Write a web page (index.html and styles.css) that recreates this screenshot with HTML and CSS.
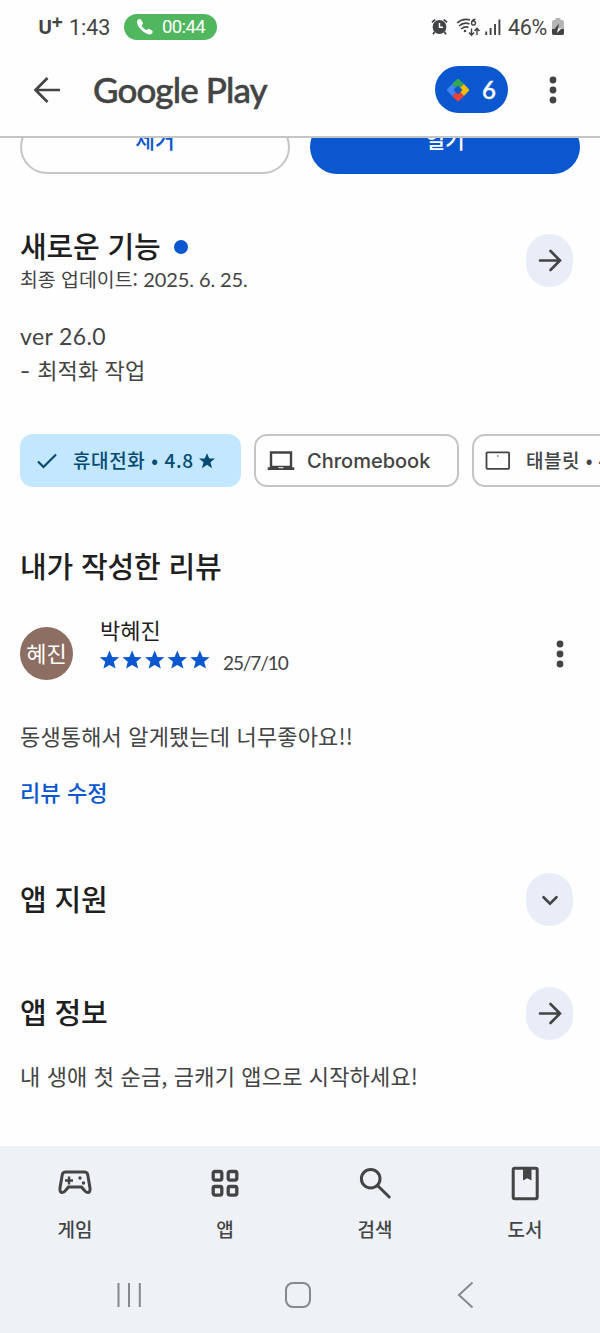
FILE: index.html
```html
<!DOCTYPE html>
<html lang="ko">
<head>
<meta charset="utf-8">
<title>Google Play</title>
<link rel="stylesheet" href="styles.css">
</head>
<body>
<div class="phone">
  <div class="status">
    <span class="carrier">U<sup>+</sup></span>
    <span class="clock">1:43</span>
    <span class="call">
      <svg width="18" height="18" viewBox="0 0 18 18"><path d="M2.2 1.6Q4 .4 5 1.5L7 5Q7.200 6 5.500 7.400Q7.200 10.600 10.400 12.200Q12 10.300 13 10.800L16.300 12.700Q17.400 13.800 16 15.400Q13.700 17.700 9 14.800Q3.600 11.500 1.500 6.600Q.2 3 2.200 1.600Z" fill="#fff"/></svg>
      <span>00:44</span>
    </span>
    <span class="grow"></span>
    <svg class="alarm" width="17" height="18" viewBox="0 0 17 18"><circle cx="8.500" cy="9" r="6.900" fill="#424344"/><path d="M1 4.300 4.200 1.600M16 4.300 12.800 1.600M3.600 14 2 16.200M13.400 14 15 16.200" stroke="#424344" stroke-width="1.800"/><path d="M8.500 5v4.300H12" fill="none" stroke="#fff" stroke-width="1.500"/></svg>
    <svg class="wifi" width="25" height="19" viewBox="0 0 25 19"><g fill="none" stroke="#424344" stroke-width="1.600"><path d="M1 5Q7 -.2 14 2M3 8Q8 3.600 13.500 6M5.200 11Q9 7.800 12.500 9.500"/><path d="M19.500 1.300Q15.500 2 15.500 5.200a2 2 0 1 0 .4-1.300" stroke-width="1.500"/><path d="M15.500 10.500v6.500M13 14.500l2.500 2.700 2.500-2.700M21 17v-6.500M18.500 13 21 10.200l2.500 2.800" stroke-width="1.400"/></g><circle cx="9" cy="13" r="1.300" fill="#424344"/></svg>
    <svg class="signal" width="16" height="17" viewBox="0 0 16 17"><path d="M1.200 12.500V16M5.600 9V16M10 5V16M14.400 .5V16" stroke="#424344" stroke-width="1.900"/></svg>
    <span class="percent">46%</span>
    <svg width="12" height="18" viewBox="0 0 12 18"><path d="M3.500 0h5v2H10q2 0 2 2v7H0V4q0-2 2-2h1.500Z" fill="#b5b5b5"/><path d="M0 11h12v4.500q0 1.500-2 1.500H2q-2 0-2-1.500Z" fill="#424344"/><path d="M7 5.500 2.600 11H6Z" fill="#424344"/><path d="M6 10.500h3.400L5 15Z" fill="#fff"/></svg>
  </div>

  <div class="appbar">
    <svg class="back" width="28" height="28" viewBox="0 0 28 28"><path d="M27 14H2M14.500 2 2.500 14l12 12" fill="none" stroke="#434444" stroke-width="2.700"/></svg>
    <span class="brand">Google Play</span>
    <span class="grow"></span>
    <span class="points">
      <svg width="24" height="24" viewBox="0 0 24 24"><g transform="rotate(45 12 12)"><path d="M4 5.500Q4 4 5.500 4H12v5H9v3H4Z" fill="#34a853"/><path d="M4 5.500Q4 4 5.500 4H12v5H9v3H4Z" fill="#fbbc04" transform="rotate(90 12 12)"/><path d="M4 5.500Q4 4 5.500 4H12v5H9v3H4Z" fill="#ea4335" transform="rotate(180 12 12)"/><path d="M4 5.500Q4 4 5.500 4H12v5H9v3H4Z" fill="#4285f4" transform="rotate(270 12 12)"/></g></svg>
      <span>6</span>
    </span>
    <svg class="more" width="8" height="28" viewBox="0 0 8 28"><g fill="#434444"><circle cx="4" cy="4" r="3.400"/><circle cx="4" cy="14" r="3.400"/><circle cx="4" cy="24" r="3.400"/></g></svg>
  </div>

  <div class="content">
    <div class="actions">
      <div class="btn outline"><span>제거</span></div>
      <div class="btn filled"><span>열기</span></div>
    </div>

    <section class="row news">
      <div class="news-head">
        <h2>새로운 기능<i class="dot"></i></h2>
        <p class="updated">최종 업데이트: <span class="lat">2025. 6. 25.</span></p>
      </div>
      <span class="round"><svg width="24" height="24" viewBox="0 0 24 24"><path d="M2 12.500H22M12.500 3 22 12.500 12.500 22" fill="none" stroke="#434444" stroke-width="2.600" stroke-linecap="round"/></svg></span>
    </section>
    <p class="notes"><span class="lat">ver 26.0</span><br><span class="dash">-</span> 최적화 작업</p>

    <div class="chips">
      <div class="chip selected">
        <svg width="20" height="16" viewBox="0 0 20 16"><path d="M1 8.500 6.500 14 19 1.500" fill="none" stroke="#064a73" stroke-width="2.200"/></svg>
        <span class="chip-phone">휴대전화 • 4.8</span>
        <svg class="chip-star" width="16" height="16" viewBox="0 0 20 20"><path d="M10 .2 12.800 6.800H20L14.300 11.500 16.300 19 10 14.800 3.700 19 5.700 11.500 0 6.800H7.200Z" fill="#064a73"/></svg>
      </div>
      <div class="chip chromebook">
        <svg width="28" height="22" viewBox="0 0 28 22"><path d="M4 2.500H24V17H4Z" fill="none" stroke="#434444" stroke-width="2.400"/><path d="M.7 17.300H27.300V20H.7Z" fill="#434444"/><path d="M11.500 17.700h5" stroke="#fff" stroke-width="1"/></svg>
        <span>Chromebook</span>
      </div>
      <div class="chip tablet">
        <svg width="26" height="20" viewBox="0 0 26 20"><rect x="1.500" y="1.300" width="22.600" height="16.500" rx=".8" fill="none" stroke="#434444" stroke-width="1.800"/><circle cx="12.800" cy="5" r=".8" fill="#434444"/></svg>
        <span>태블릿 • 4.6</span>
      </div>
    </div>

    <h2 class="review-title">내가 작성한 리뷰</h2>
    <div class="review">
      <span class="avatar">혜진</span>
      <div class="who">
        <div class="name">박혜진</div>
        <div class="rating">
          <svg width="110" height="20" viewBox="0 0 110 20" fill="#0b57d0"><defs><path id="star" d="M9.500 .5 12.200 6.900 19.200 7.300 13.800 11.800 15.600 18.600 9.500 14.900 3.400 18.600 5.200 11.800 -.2 7.300 6.800 6.900Z"/></defs><use href="#star"/><use href="#star" x="22.600"/><use href="#star" x="45.200"/><use href="#star" x="67.800"/><use href="#star" x="90.400"/></svg>
          <span class="date">25/7/10</span>
        </div>
      </div>
      <span class="grow"></span>
      <svg class="more2" width="8" height="28" viewBox="0 0 8 28"><g fill="#434444"><circle cx="4" cy="4" r="3.400"/><circle cx="4" cy="14" r="3.400"/><circle cx="4" cy="24" r="3.400"/></g></svg>
    </div>
    <p class="text">동생통해서 알게됐는데 너무좋아요!!</p>
    <p class="edit">리뷰 수정</p>

    <section class="row support">
      <h2>앱 지원</h2>
      <span class="round"><svg width="24" height="24" viewBox="0 0 24 24"><path d="M5.500 9.200 12 15.600 18.500 9.200" fill="none" stroke="#434444" stroke-width="2.600" stroke-linecap="round"/></svg></span>
    </section>
    <section class="row info">
      <h2>앱 정보</h2>
      <span class="round"><svg width="24" height="24" viewBox="0 0 24 24"><path d="M2 12.500H22M12.500 3 22 12.500 12.500 22" fill="none" stroke="#434444" stroke-width="2.600" stroke-linecap="round"/></svg></span>
    </section>
    <p class="text about">내 생애 첫 순금, 금캐기 앱으로 시작하세요!</p>
  </div>

  <div class="bottom">
    <nav class="tabs">
      <div class="tab">
        <svg width="36" height="36" viewBox="0 0 36 36"><path d="M8.500 7H27.500Q30 7 30.700 9.500L33 23Q33.500 27.600 30.500 27.600 29 27.600 27.500 25.500L24.500 22H11.500L8.500 25.500Q7 27.600 5.500 27.600 2.500 27.600 3 23L5.300 9.500Q6 7 8.500 7Z" fill="none" stroke="#434444" stroke-width="3"/><path d="M12 11.500v8M8 15.500h8" stroke="#434444" stroke-width="2.400"/><circle cx="23" cy="13" r="1.700" fill="#434444"/><circle cx="26.500" cy="18" r="1.700" fill="#434444"/></svg>
        <span>게임</span>
      </div>
      <div class="tab">
        <svg width="36" height="36" viewBox="0 0 36 36"><g fill="none" stroke="#434444" stroke-width="3.300"><rect x="6.200" y="6.500" width="8.600" height="8.600" rx="1.800"/><rect x="21.200" y="6.500" width="8.600" height="8.600" rx="1.800"/><rect x="6.200" y="21.500" width="8.600" height="8.600" rx="1.800"/><rect x="21.200" y="21.500" width="8.600" height="8.600" rx="1.800"/></g></svg>
        <span>앱</span>
      </div>
      <div class="tab">
        <svg width="36" height="36" viewBox="0 0 36 36"><g fill="none" stroke="#434444" stroke-width="3"><circle cx="13.700" cy="13.700" r="9.300"/><path d="M20.500 20.500 32.200 32" stroke-linecap="round"/></g></svg>
        <span>검색</span>
      </div>
      <div class="tab">
        <svg width="36" height="36" viewBox="0 0 36 36"><rect x="6.200" y="3.200" width="24" height="30.500" rx="1.500" fill="none" stroke="#434444" stroke-width="3"/><path d="M16 3h8.500v12.600l-4.200-2.400L16 15.600Z" fill="#434444"/></svg>
        <span>도서</span>
      </div>
    </nav>
    <div class="system">
      <svg width="28" height="28" viewBox="0 0 28 28"><path d="M3.500 2V26M14 2V26M24.800 2V26" stroke="#85898d" stroke-width="2"/></svg>
      <svg width="28" height="28" viewBox="0 0 28 28"><rect x="2" y="2" width="24" height="24" rx="7" fill="none" stroke="#85898d" stroke-width="2"/></svg>
      <svg width="28" height="28" viewBox="0 0 28 28"><path d="M20.500 1.500 7 14 20.500 26.500" fill="none" stroke="#85898d" stroke-width="2"/></svg>
    </div>
  </div>
</div>
</body>
</html>
```
FILE: styles.css
```css
* { box-sizing: border-box; }
body { margin: 0; background: #fefefe; color: #434444; font-family: "Noto Sans CJK KR", sans-serif; }
h2, p { margin: 0; }
svg { display: block; flex: none; overflow: visible; }
.phone { width: 600px; height: 1333px; overflow: hidden; display: flex; flex-direction: column; white-space: nowrap; }
.grow { flex: 1; }

.status { height: 56px; flex: none; display: flex; align-items: center; padding: 0 36px 2px 38px; font-family: Roboto, sans-serif; }
.carrier { width: 31px; font: 700 19px/24px "Open Sans", sans-serif; letter-spacing: -1px; }
.carrier sup { font-size: 20px; line-height: 0; vertical-align: 5px; }
.clock { width: 55px; font-size: 21.500px; }
.call { width: 93px; height: 26px; border-radius: 13px; background: #50b75f; color: #fff; font-size: 18.500px; letter-spacing: -.6px; display: flex; align-items: center; padding-left: 12px; gap: 8px; }
.alarm { margin-right: 8px; }
.wifi { margin-right: 4px; }
.signal { margin-right: 7px; }
.percent { width: 44px; font-size: 21.500px; letter-spacing: -.3px; }

.appbar { height: 82px; flex: none; display: flex; align-items: center; padding: 0 43px 13px 33px; border-bottom: 2px solid #c4c5c5; }
.brand { margin-left: 32px; padding-bottom: 1px; font: 500 35px/44px Lato, sans-serif; letter-spacing: -.9px; -webkit-text-stroke: .5px #434444; }
.points { width: 73px; height: 47px; border-radius: 24px; background: #0b57d0; color: #fff; display: flex; align-items: center; padding-left: 11px; gap: 12px; font: 500 24px/28px Lato, sans-serif; -webkit-text-stroke: .4px #fff; }
.points svg { transform: scale(1.040); }
.more { margin-left: 41px; }

.content { flex: 1; overflow: hidden; padding-left: 20px; }
.actions { display: flex; gap: 20px; height: 54px; margin-top: -18px; }
.btn { width: 270px; height: 54px; border-radius: 32px; text-align: center; font-size: 21.500px; font-weight: 500; line-height: 38px; }
.outline { border: 2px solid #c4c5c5; color: #0b57d0; line-height: 34px; }
.filled { background: #0b57d0; color: #fff; }
.row { display: flex; justify-content: space-between; align-items: center; padding-right: 27px; }
h2 { font-size: 29px; font-weight: 500; line-height: 40px; letter-spacing: -.15px; color: #1f1f1f; }
.row > h2 { padding-bottom: 4px; }
.round { width: 47px; height: 53px; border-radius: 24px; background: #e8edf7; display: grid; place-items: center; }
.news { margin-top: 51px; height: 70px; }
.news-head { padding-bottom: 3px; }
.dot { display: inline-block; width: 14px; height: 14px; border-radius: 50%; background: #0b57d0; margin-left: 13px; vertical-align: 4px; }
.updated { font-size: 19.400px; line-height: 27px; }
.updated .lat { font: 20px/26px Lato, sans-serif; letter-spacing: -.1px; }
.notes { margin-top: 24px; font-size: 22px; line-height: 33px; letter-spacing: .1px; }
.dash { display: inline-block; width: 11px; font-family: Inter, sans-serif; }
.notes .lat { font: 23px/33px Lato, sans-serif; letter-spacing: .4px; }

.chips { display: flex; gap: 13px; margin-top: 46px; font-size: 19px; font-weight: 500; }
.chip { height: 53px; border-radius: 13px; border: 2px solid #c4c5c5; display: flex; align-items: center; flex: none; padding: 0 0 0 11px; }
.selected { width: 221px; border: 0; background: #c2e7ff; color: #064a73; padding-left: 17px; }
.selected span { margin-left: 16px; padding-bottom: 2px; letter-spacing: .6px; }
.chip-star { margin-left: 5px; }
.chromebook { width: 205px; font: 500 20px/28px Inter, sans-serif; gap: 12px; }
.tablet { width: 220px; gap: 15px; }
.tablet span { padding-bottom: 2px; letter-spacing: .5px; }

.review-title { margin-top: 58px; }
.review { display: flex; height: 70px; margin-top: 31px; padding-right: 36px; align-items: center; }
.avatar { width: 53px; height: 53px; margin-top: 5px; border-radius: 50%; background: #8d6e63; color: #fff; font-size: 22px; line-height: 51px; text-align: center; }
.who { margin-left: 27px; padding-bottom: 14px; }
.name { font-size: 22px; line-height: 32px; color: #1f1f1f; }
.rating { display: flex; gap: 13px; height: 30px; align-items: center; }
.date { font: 19px/28px Lato, sans-serif; letter-spacing: -1.100px; padding-top: 6px; }
.more2 { margin-top: 6px; }
.text { margin-top: 33px; font-size: 22px; line-height: 32px; letter-spacing: .15px; }
.edit { margin-top: 24px; font-size: 22px; line-height: 32px; letter-spacing: .1px; font-weight: 500; color: #0b57d0; }
.support { margin-top: 66px; }
.info { margin-top: 60.500px; }
.about { margin-top: 19px; }

.bottom { height: 187px; flex: none; background: #eef2f7; }
.tabs { display: grid; grid-template-columns: repeat(4, 150px); padding-top: 19px; height: 120px; }
.tab { display: flex; flex-direction: column; align-items: center; gap: 14px; font-size: 19px; font-weight: 500; line-height: 28px; }
.system { display: flex; justify-content: space-between; padding: 15px 120px 0 115px; }
```
